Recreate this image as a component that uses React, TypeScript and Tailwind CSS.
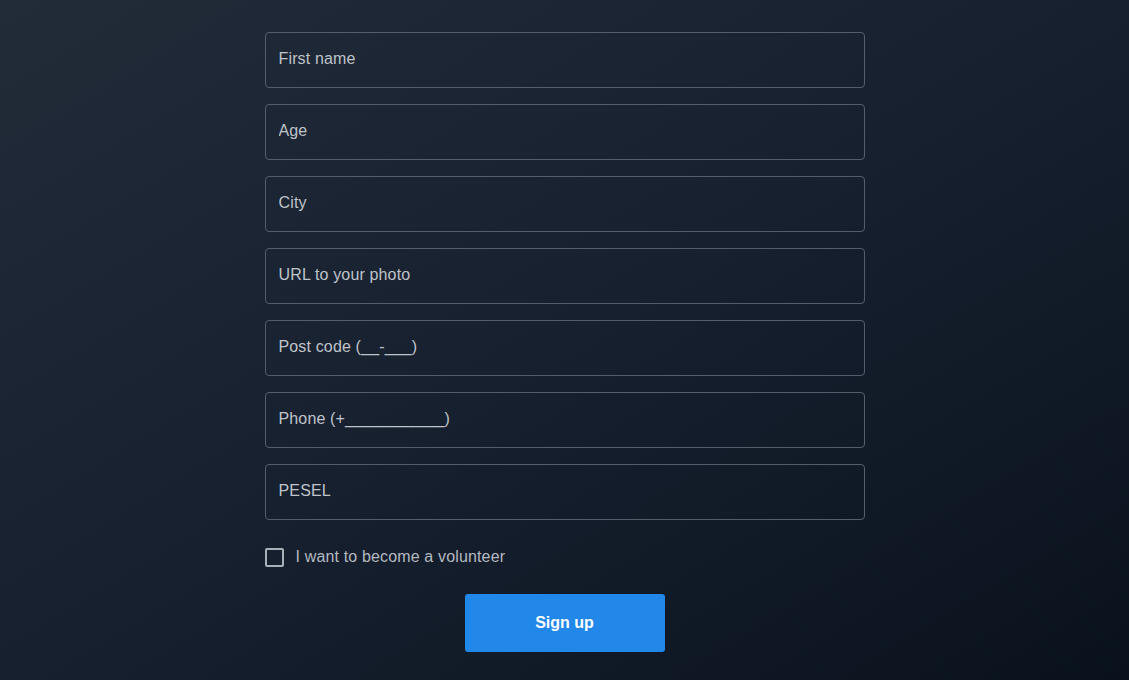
import React from "react";

const fields = [
  "First name",
  "Age",
  "City",
  "URL to your photo",
  "Post code (__-___)",
  "Phone (+___________)",
  "PESEL",
];

export default function App() {
  return (
    <div
      className="min-h-[680px] w-full bg-gradient-to-br from-[#222b38] via-[#17202f] to-[#09121c] flex justify-center"
      style={{ fontFamily: '"Liberation Sans", Arial, sans-serif' }}
    >
      <form className="w-[600px] pt-[32px] flex flex-col" onSubmit={(e) => e.preventDefault()}>
        <div className="flex flex-col gap-[16px]">
          {fields.map((f) => (
            <input
              key={f}
              placeholder={f}
              className="h-[56px] w-full rounded-[4px] border border-[#545d6b] bg-transparent px-[13px] pb-[2px] text-[16px] tracking-[0.15px] text-[#c3c7ce] placeholder:text-[#bfc3ca] outline-none"
            />
          ))}
        </div>
        <label className="mt-[28px] flex items-center gap-[12px] h-[18px]">
          <span className="w-[19px] h-[19px] rounded-[2px] border-2 border-[#aab0b8] box-border" />
          <span className="text-[16px] tracking-[0.15px] text-[#b4b9c1]">I want to become a volunteer</span>
        </label>
        <div className="mt-[28px] flex justify-center">
          <button
            type="submit"
            className="w-[200px] h-[58px] rounded-[3px] bg-[#2188ea] text-white font-bold text-[16px]"
          >
            Sign up
          </button>
        </div>
      </form>
    </div>
  );
}
